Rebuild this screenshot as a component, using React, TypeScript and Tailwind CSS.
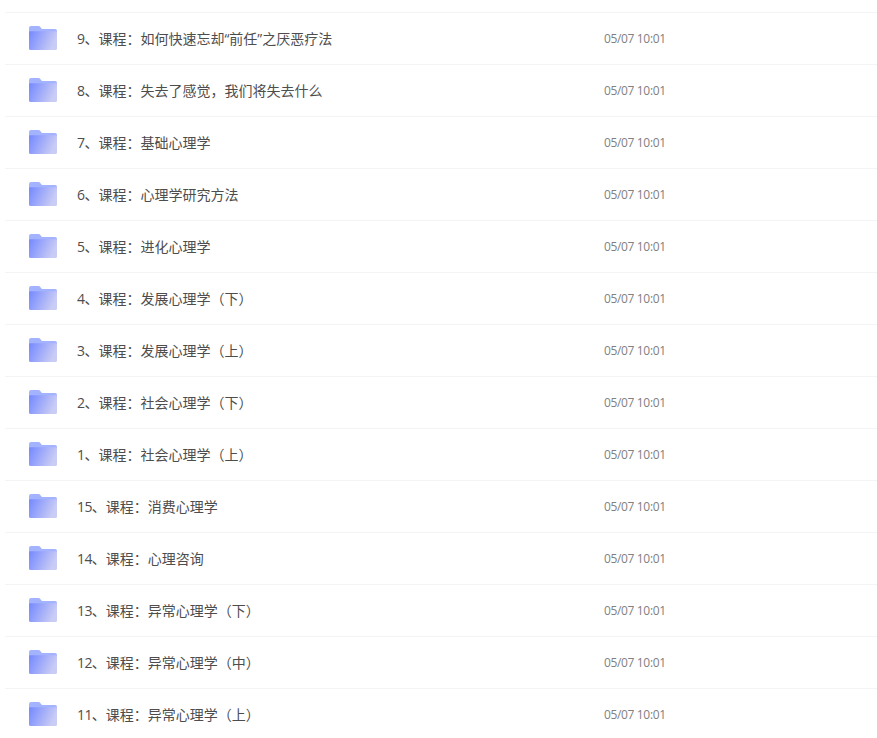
const rows: [string, string][] = [
  ["9", "、课程：如何快速忘却“前任”之厌恶疗法"],
  ["8", "、课程：失去了感觉，我们将失去什么"],
  ["7", "、课程：基础心理学"],
  ["6", "、课程：心理学研究方法"],
  ["5", "、课程：进化心理学"],
  ["4", "、课程：发展心理学（下）"],
  ["3", "、课程：发展心理学（上）"],
  ["2", "、课程：社会心理学（下）"],
  ["1", "、课程：社会心理学（上）"],
  ["15", "、课程：消费心理学"],
  ["14", "、课程：心理咨询"],
  ["13", "、课程：异常心理学（下）"],
  ["12", "、课程：异常心理学（中）"],
  ["11", "、课程：异常心理学（上）"],
];

function Folder({ id }: { id: string }) {
  return (
    <svg width="28" height="24" viewBox="0 0 28 24" className="shrink-0">
      <defs>
        <linearGradient id={id} x1="0" y1="0" x2="1" y2="0.3">
          <stop offset="0" stopColor="#7488ff" />
          <stop offset="1" stopColor="#c9ccf4" />
        </linearGradient>
      </defs>
      <path d="M0 2a2 2 0 0 1 2-2h7c1.200 0 1.800.5 2.600 1.400L13 3h13a2 2 0 0 1 2 2v4H0z" fill="#a3b3ff" />
      <path d="M0 6.200a1 1 0 0 1 1-1h26a1 1 0 0 1 1 1V22.500a1.500 1.500 0 0 1-1.500 1.500h-25A1.500 1.500 0 0 1 0 22.500z" fill={`url(#${id})`} />
    </svg>
  );
}

export default function App() {
  return (
    <div className="w-[877px] h-[738px] overflow-hidden bg-white pt-[12px] pl-[5px] font-['Open_Sans','Noto_Sans_CJK_SC',sans-serif]">
      {rows.map(([n, t], i) => (
        <div key={n} className="flex items-center h-[52px] border-t border-[#f4f4f6] box-border">
          <div className="ml-[24px] w-[48px] shrink-0 -mt-[2px]">
            <Folder id={`f${i}`} />
          </div>
          <div className="w-[527px] shrink-0 text-[14px] leading-[20px] text-[#4d4d4d] mt-[1px]">
            <span className="tracking-[-0.6px]">{n}</span>
            {t}
          </div>
          <div className="text-[12px] leading-[16px] text-[#808080] tracking-[-0.35px] mt-[1px]">05/07 10:01</div>
        </div>
      ))}
    </div>
  );
}
